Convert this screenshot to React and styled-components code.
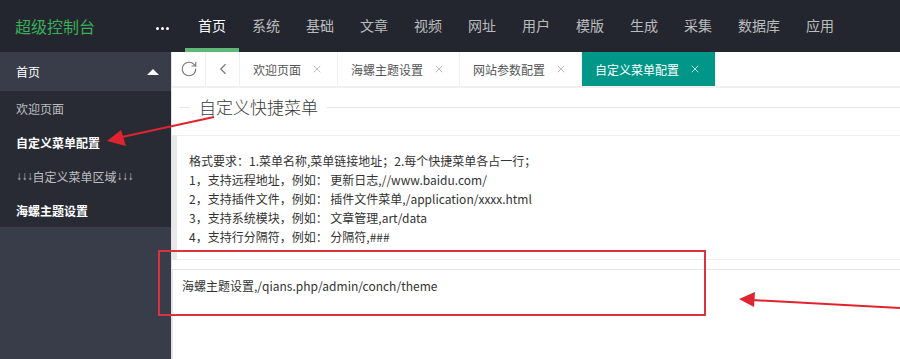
import React from 'react';
import styled, { createGlobalStyle } from 'styled-components';
import { RotateCw, ChevronLeft, X } from 'lucide-react';

const GlobalStyle = createGlobalStyle`
  html, body {
    margin: 0;
    padding: 0;
    background: #fff;
  }
  body {
    font-family: "Noto Sans CJK SC", "Liberation Sans", sans-serif;
    font-size: 12px;
    color: #333;
  }
  * {
    box-sizing: border-box;
  }
`;

const Page = styled.div`
  position: relative;
  width: 100%;
  height: 100vh;
  overflow: hidden;
  display: flex;
  flex-direction: column;
`;

const Header = styled.header`
  height: 52px;
  flex-shrink: 0;
  background-color: #23262e;
  display: flex;
  align-items: stretch;
`;

const Logo = styled.div`
  width: 140px;
  padding-left: 15px;
  display: flex;
  align-items: center;
  font-size: 16px;
  color: #3aae58;
`;

const More = styled.div`
  width: 45px;
  display: flex;
  align-items: center;
  justify-content: center;
  gap: 2px;
  padding-top: 4px;
`;

const Dot = styled.span`
  width: 3px;
  height: 3px;
  border-radius: 50%;
  background: #fff;
`;

const Nav = styled.nav`
  display: flex;
  align-items: stretch;
`;

const NavItem = styled.a`
  position: relative;
  padding: 0 13px;
  display: flex;
  align-items: center;
  font-size: 14px;
  color: ${(p) => (p.$active ? '#fff' : 'rgba(255, 255, 255, 0.7)')};
  text-decoration: none;
  padding-bottom: 2px;

  &::after {
    content: '';
    position: absolute;
    left: 0;
    right: 0;
    bottom: 0;
    height: 4px;
    background: ${(p) => (p.$active ? '#5fb878' : 'transparent')};
  }
`;

const Body = styled.div`
  flex: 1;
  display: flex;
  min-height: 0;
`;

const Sidebar = styled.aside`
  width: 171px;
  flex-shrink: 0;
  background-color: #393d49;
  display: flex;
  flex-direction: column;
`;

const SideTitle = styled.div`
  height: 39px;
  padding: 0 10px 0 16px;
  display: flex;
  align-items: center;
  justify-content: space-between;
  color: #fff;
  font-size: 12px;
`;

const Caret = styled.span`
  width: 0;
  height: 0;
  border-left: 6px solid transparent;
  border-right: 6px solid transparent;
  border-bottom: 6px solid #fff;
  margin-right: 2px;
`;

const SideList = styled.div`
  background-color: #282b33;
  display: flex;
  flex-direction: column;
`;

const SideItem = styled.a`
  height: 34px;
  padding-left: 16px;
  display: flex;
  align-items: center;
  font-size: 12px;
  color: ${(p) => (p.$strong ? '#fff' : 'rgba(255, 255, 255, 0.7)')};
  font-weight: ${(p) => (p.$strong ? 700 : 400)};
  text-decoration: none;
`;

const Arrows = styled.span`
  font-family: "Liberation Sans", sans-serif;
  font-weight: 700;
  letter-spacing: -0.5px;
`;

const Main = styled.main`
  flex: 1;
  min-width: 0;
  border-left: 1px solid #e2e2e2;
  display: flex;
  flex-direction: column;
  background: #fff;
`;

const TabBar = styled.div`
  height: 36px;
  flex-shrink: 0;
  display: flex;
  border-bottom: 2px solid #f0f0f0;
`;

const ToolCell = styled.div`
  width: 34px;
  display: flex;
  align-items: center;
  justify-content: center;
  border-right: 1px solid #f0f0f0;
  color: #777;
`;

const Tab = styled.div`
  display: flex;
  align-items: center;
  gap: 10px;
  padding: 0 14px 0 13px;
  font-size: 12px;
  color: ${(p) => (p.$active ? '#fff' : '#555')};
  background: ${(p) => (p.$active ? '#009688' : '#fff')};
  border-right: 1px solid #f0f0f0;

  svg {
    color: ${(p) => (p.$active ? '#fff' : '#aaa')};
  }
`;

const Content = styled.div`
  flex: 1;
  display: flex;
  flex-direction: column;
`;

const FieldSet = styled.fieldset`
  margin: 7px 0 0 8px;
  padding: 0;
  border: none;
  border-top: 1px solid #e6e6e6;
`;

const Legend = styled.legend`
  margin-left: 10px;
  padding: 0 9px;
  font-size: 17px;
  line-height: 24px;
  color: #3a3a3a;
  font-weight: 300;
`;

const Quote = styled.div`
  margin-top: 16px;
  padding: 15px 12px 13px;
  border: 1px solid #eee;
  border-left: 5px solid #e8e8e8;
  border-right: none;
  background: #fff;
  line-height: 19px;
  color: #333;
`;

const Line = styled.div`
  white-space: nowrap;
`;

const TextArea = styled.textarea`
  margin-top: 9px;
  width: 100%;
  height: 120px;
  padding: 6px 9px;
  border: 1px solid #e6e6e6;
  border-right: none;
  font-family: "Noto Sans CJK SC", "Liberation Sans", sans-serif;
  font-size: 12px;
  line-height: 20px;
  color: #333;
  resize: none;
  outline: none;
  display: block;
`;

const Highlight = styled.div`
  position: absolute;
  left: 158px;
  top: 250px;
  width: 548px;
  height: 66px;
  border: 2px solid #d9333f;
  pointer-events: none;
`;

const Overlay = styled.svg`
  position: absolute;
  left: 0;
  top: 0;
  pointer-events: none;
`;

const navItems = ['首页', '系统', '基础', '文章', '视频', '网址', '用户', '模版', '生成', '采集', '数据库', '应用'];

const tabs = [
  { label: '欢迎页面' },
  { label: '海螺主题设置' },
  { label: '网站参数配置' },
  { label: '自定义菜单配置', active: true },
];

const App = () => {
  return (
    <Page>
      <GlobalStyle />
      <Header>
        <Logo>超级控制台</Logo>
        <More>
          <Dot />
          <Dot />
          <Dot />
        </More>
        <Nav>
          {navItems.map((n, i) => (
            <NavItem key={n} $active={i === 0}>{n}</NavItem>
          ))}
        </Nav>
      </Header>
      <Body>
        <Sidebar>
          <SideTitle>
            首页
            <Caret />
          </SideTitle>
          <SideList>
            <SideItem>欢迎页面</SideItem>
            <SideItem $strong>自定义菜单配置</SideItem>
            <SideItem>
              <Arrows>↓↓↓</Arrows>自定义菜单区域<Arrows>↓↓↓</Arrows>
            </SideItem>
            <SideItem $strong>海螺主题设置</SideItem>
          </SideList>
        </Sidebar>
        <Main>
          <TabBar>
            <ToolCell>
              <RotateCw size={18} strokeWidth={1.5} />
            </ToolCell>
            <ToolCell>
              <ChevronLeft size={18} strokeWidth={1.5} />
            </ToolCell>
            {tabs.map((t) => (
              <Tab key={t.label} $active={t.active}>
                {t.label}
                <X size={12} strokeWidth={1.5} />
              </Tab>
            ))}
          </TabBar>
          <Content>
            <FieldSet>
              <Legend>自定义快捷菜单</Legend>
            </FieldSet>
            <Quote>
              <Line>格式要求：1.菜单名称,菜单链接地址；2.每个快捷菜单各占一行；</Line>
              <Line>1，支持远程地址，例如： 更新日志,//www.baidu.com/</Line>
              <Line>2，支持插件文件，例如： 插件文件菜单,/application/xxxx.html</Line>
              <Line>3，支持系统模块，例如： 文章管理,art/data</Line>
              <Line>4，支持行分隔符，例如： 分隔符,###</Line>
            </Quote>
            <TextArea readOnly defaultValue="海螺主题设置,/qians.php/admin/conch/theme" />
          </Content>
        </Main>
      </Body>
      <Highlight />
      <Overlay width="900" height="359" viewBox="0 0 900 359">
        <line x1="214" y1="117" x2="122" y2="137" stroke="#e0242f" strokeWidth="2" />
        <polygon points="107,141 121,130 126,146" fill="#e0242f" />
        <line x1="900" y1="308" x2="752" y2="300" stroke="#e0242f" strokeWidth="2" />
        <polygon points="739,299 755,292 754,307" fill="#e0242f" />
      </Overlay>
    </Page>
  );
};

export default App;
